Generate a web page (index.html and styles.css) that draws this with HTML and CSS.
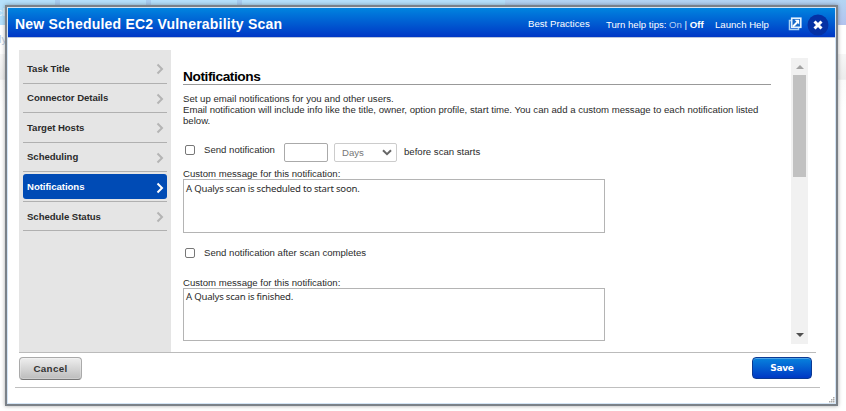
FILE: index.html
```html
<!DOCTYPE html>
<html lang="en">
<head>
<meta charset="utf-8">
<title>New Scheduled EC2 Vulnerability Scan</title>
<link rel="stylesheet" href="styles.css">
</head>
<body>
<div class="backdrop"><div class="tabs"><i></i><i></i><i></i></div><div class="shade"></div><span class="behind one">ch</span><span class="behind two">ly</span></div>
<div class="dialog">
  <header class="header">
    <h1><span>New Scheduled EC2 Vulnerability Scan</span></h1>
    <a class="best">Best Practices</a>
    <span class="tips">Turn help tips: <span class="on">On</span> | <b>Off</b></span>
    <a class="launch">Launch Help</a>
    <svg class="popout" width="14" height="14" viewBox="0 0 14 14"><path d="M3 3.500H1.500v9h9V11" fill="none" stroke="#a9d2f5" stroke-width="1.500"/><rect x="3.700" y="1.200" width="9.100" height="9.100" fill="#1668c8" stroke="#e4f2ff" stroke-width="1.600"/><path d="M5 9.500L9.500 5" stroke="#fff" stroke-width="2"/><path d="M6.500 2.800h4.700v4.700z" fill="#fff"/></svg>
    <svg class="close" width="22" height="22" viewBox="0 0 22 22"><circle cx="11" cy="11" r="10.500" fill="#0531a4"/><path d="M7.500 7.500l7 7m0-7l-7 7" stroke="#fff" stroke-width="3"/></svg>
  </header>
  <div class="body">
    <nav class="side">
      <div class="item"><span>Task Title</span><svg width="8" height="12" viewBox="0 0 8 12"><path d="M1.500 1.500L6 6l-4.500 4.500"/></svg></div>
      <div class="item"><span>Connector Details</span><svg width="8" height="12" viewBox="0 0 8 12"><path d="M1.500 1.500L6 6l-4.500 4.500"/></svg></div>
      <div class="item"><span>Target Hosts</span><svg width="8" height="12" viewBox="0 0 8 12"><path d="M1.500 1.500L6 6l-4.500 4.500"/></svg></div>
      <div class="item"><span>Scheduling</span><svg width="8" height="12" viewBox="0 0 8 12"><path d="M1.500 1.500L6 6l-4.500 4.500"/></svg></div>
      <div class="item active"><span>Notifications</span><svg width="8" height="12" viewBox="0 0 8 12"><path d="M1.500 1.500L6 6l-4.500 4.500"/></svg></div>
      <div class="item"><span>Schedule Status</span><svg width="8" height="12" viewBox="0 0 8 12"><path d="M1.500 1.500L6 6l-4.500 4.500"/></svg></div>
    </nav>
    <main class="content">
      <h2><span>Notifications</span></h2>
      <p class="intro"><span>Set up email notifications for you and other users.</span><br><span>Email notification will include info like the title, owner, option profile, start time. You can add a custom message to each notification listed</span><br><span>below.</span></p>
      <div class="row first"><i class="check"></i><span class="send">Send notification</span><i class="field"></i><span class="select"><span>Days</span><svg width="10" height="7" viewBox="0 0 10 7"><path d="M1 1.200l4 4 4-4" fill="none" stroke="#666" stroke-width="2"/></svg></span><span class="before">before scan starts</span></div>
      <div class="label"><span>Custom message for this notification:</span></div>
      <div class="area a1"><span>A Qualys scan is scheduled to start soon.</span></div>
      <div class="row second"><i class="check"></i><span class="after">Send notification after scan completes</span></div>
      <div class="label"><span>Custom message for this notification:</span></div>
      <div class="area a2"><span>A Qualys scan is finished.</span></div>
    </main>
    <div class="scroll"><i class="up"></i><i class="thumb"></i><i class="down"></i></div>
  </div>
  <footer class="footer">
    <button class="cancel"><span>Cancel</span></button>
    <button class="save"><span>Save</span></button>
  </footer>
  <svg class="grip" width="6" height="6" viewBox="0 0 6 6"><path d="M4 0h1.500v1.500H4zM2 2h1.500v1.500H2zM4 2h1.500v1.500H4zM0 4h1.500v1.500H0zM2 4h1.500v1.500H2zM4 4h1.500v1.500H4z" fill="#aaa"/></svg>
</div>
</body>
</html>
```
FILE: styles.css
```css
* { box-sizing: border-box; }
body { margin: 0; width: 846px; height: 411px; overflow: hidden; background: #fff; font: 9.6px/11px "Liberation Sans", Arial, sans-serif; color: #2b2b2b; position: relative; white-space: nowrap; }
.backdrop { height: 411px; }
.tabs { height: 25px; display: flex; gap: 86px; padding-left: 55px; background: linear-gradient(90deg, #b5e0fb 505px, transparent 505px), linear-gradient(#b4d5f3, #b2c3ee); }
.tabs i { width: 5px; height: 5px; background: #a9cdf0; }
.shade { height: 56px; margin-top: 29px; background: linear-gradient(#f7f7f7, #ececec 45%, #fbfbfb 47%, #fff); }
.behind { position: absolute; left: 0; font-size: 11px; color: #e9f6ff; }
.behind.one { top: 7px; left: -3px; }
.behind.two { top: 34px; left: -1px; color: #b9cde2; }
.dialog { position: absolute; left: 5px; top: 5px; width: 833px; height: 401px; border: 2px solid #7b8188; background: #fff; box-shadow: 0 0 4px rgba(0,0,0,.35), inset 0 0 0 1px #d3e4f5; padding: 1px; display: flex; flex-direction: column; }
.header { height: 30px; flex: none; display: flex; color: #fff; background: linear-gradient(#0084df, #0037c5); border-bottom: 1px solid #b9c6dd; padding-left: 8px; }
h1 { margin: 8px 0 0 -1px; width: 513px; font-size: 14px; line-height: 16px; letter-spacing: .22px; }
.best { width: 78px; margin-top: 10px; letter-spacing: .03px; }
.tips { width: 109px; margin-top: 11px; }
.on { color: #b7cff2; }
.launch { width: 73px; margin-top: 11px; }
.popout { margin-top: 9px; flex: none; }
.close { margin: 6px 0 0 5px; flex: none; }
.body { height: 315px; flex: none; margin: 0 19px 0 11px; padding-top: 12px; display: flex; border-bottom: 1px solid #bbb; }
.side { width: 152px; flex: none; background: #e5e5e5; padding: 4px 4px 0; font-weight: bold; }
.item { height: 29.5px; border-bottom: 1px solid #b0b0b0; display: flex; align-items: center; justify-content: space-between; padding: 0 3px 0 4px; letter-spacing: -.05px; }
.item svg { fill: none; stroke: #b4b4b4; stroke-width: 2; margin-top: 2px; }
.active { height: 25px; margin: 2px 0 1.5px; border: 0; border-radius: 3px; color: #fff; background: #004bb5; }
.active + .item { height: 30.5px; border-top: 1px solid #b0b0b0; padding-top: 1px; }
.active svg { stroke: #fff; }
.content { width: 588px; margin-left: 12px; flex: none; padding-top: 19px; }
h2 { margin: 0; height: 16px; font-size: 13.7px; line-height: 15px; letter-spacing: -.42px; color: #000; border-bottom: 1px solid #999; }
.intro { margin: 8px 0 0; height: 33px; }
.row { display: flex; }
.check { width: 10px; height: 10px; border: 1px solid #777; border-radius: 2px; margin-left: 2px; }
.first { height: 20px; margin-top: 17px; }
.first .check { margin-top: 2px; }
.send { width: 80px; margin: 1px 0 0 9px; }
.field { width: 44px; height: 19px; border: 1px solid #aaa; border-radius: 2px; }
.select { width: 63px; height: 19px; margin-left: 6px; border: 1px solid #ccc; border-radius: 2px; display: flex; align-items: center; justify-content: space-between; padding: 0 4px 0 7px; color: #777; }
.before { margin: 3px 0 0 7px; }
.label { height: 11px; margin-top: 5px; }
.area { width: 422px; border: 1px solid #b4b4b4; padding: 3px 0 0 2px; font-family: "Noto Sans", sans-serif; letter-spacing: -.23px; }
.a1 { height: 54px; }
.a2 { height: 53px; padding-top: 2px; }
.second { margin-top: 15px; height: 24px; }
.second .check { margin-top: 0; }
.after { margin: -1px 0 0 9px; }
.scroll { width: 17px; height: 286px; margin: 8px 0 0 20px; flex: none; background: #f1f1f1; display: flex; flex-direction: column; align-items: center; }
.up, .down { border: 4px solid transparent; }
.up { border-bottom-color: #a3a3a3; border-top: 0; margin: 7px 0 6px; }
.thumb { width: 13px; height: 102px; background: #c1c1c1; }
.down { border-top-color: #505050; border-bottom: 0; margin-top: auto; margin-bottom: 7px; }
.footer { height: 35px; flex: none; margin: 0 15px 0 7px; padding: 4px 8px 0 4px; display: flex; justify-content: space-between; border-bottom: 1px solid #bfbfbf; }
button { font: bold 9.8px/14px "Liberation Sans", Arial, sans-serif; padding: 0; letter-spacing: .35px; }
.cancel { width: 63px; height: 23px; border: 1px solid #aaa; border-bottom-color: #777; border-radius: 4px; color: #333; background: linear-gradient(#eee, #bcbcbc); box-shadow: inset 0 0 0 1px rgba(255,255,255,.25); }
.save { width: 60px; height: 22px; border: 1px solid #0b3993; border-radius: 4px; color: #fff; background: linear-gradient(#0783dd, #0038c4); box-shadow: inset 0 1px #4fa4e6; font-family: "DejaVu Sans", sans-serif; font-size: 9px; letter-spacing: -.3px; }
.grip { position: absolute; right: 1px; bottom: 1px; }
```
